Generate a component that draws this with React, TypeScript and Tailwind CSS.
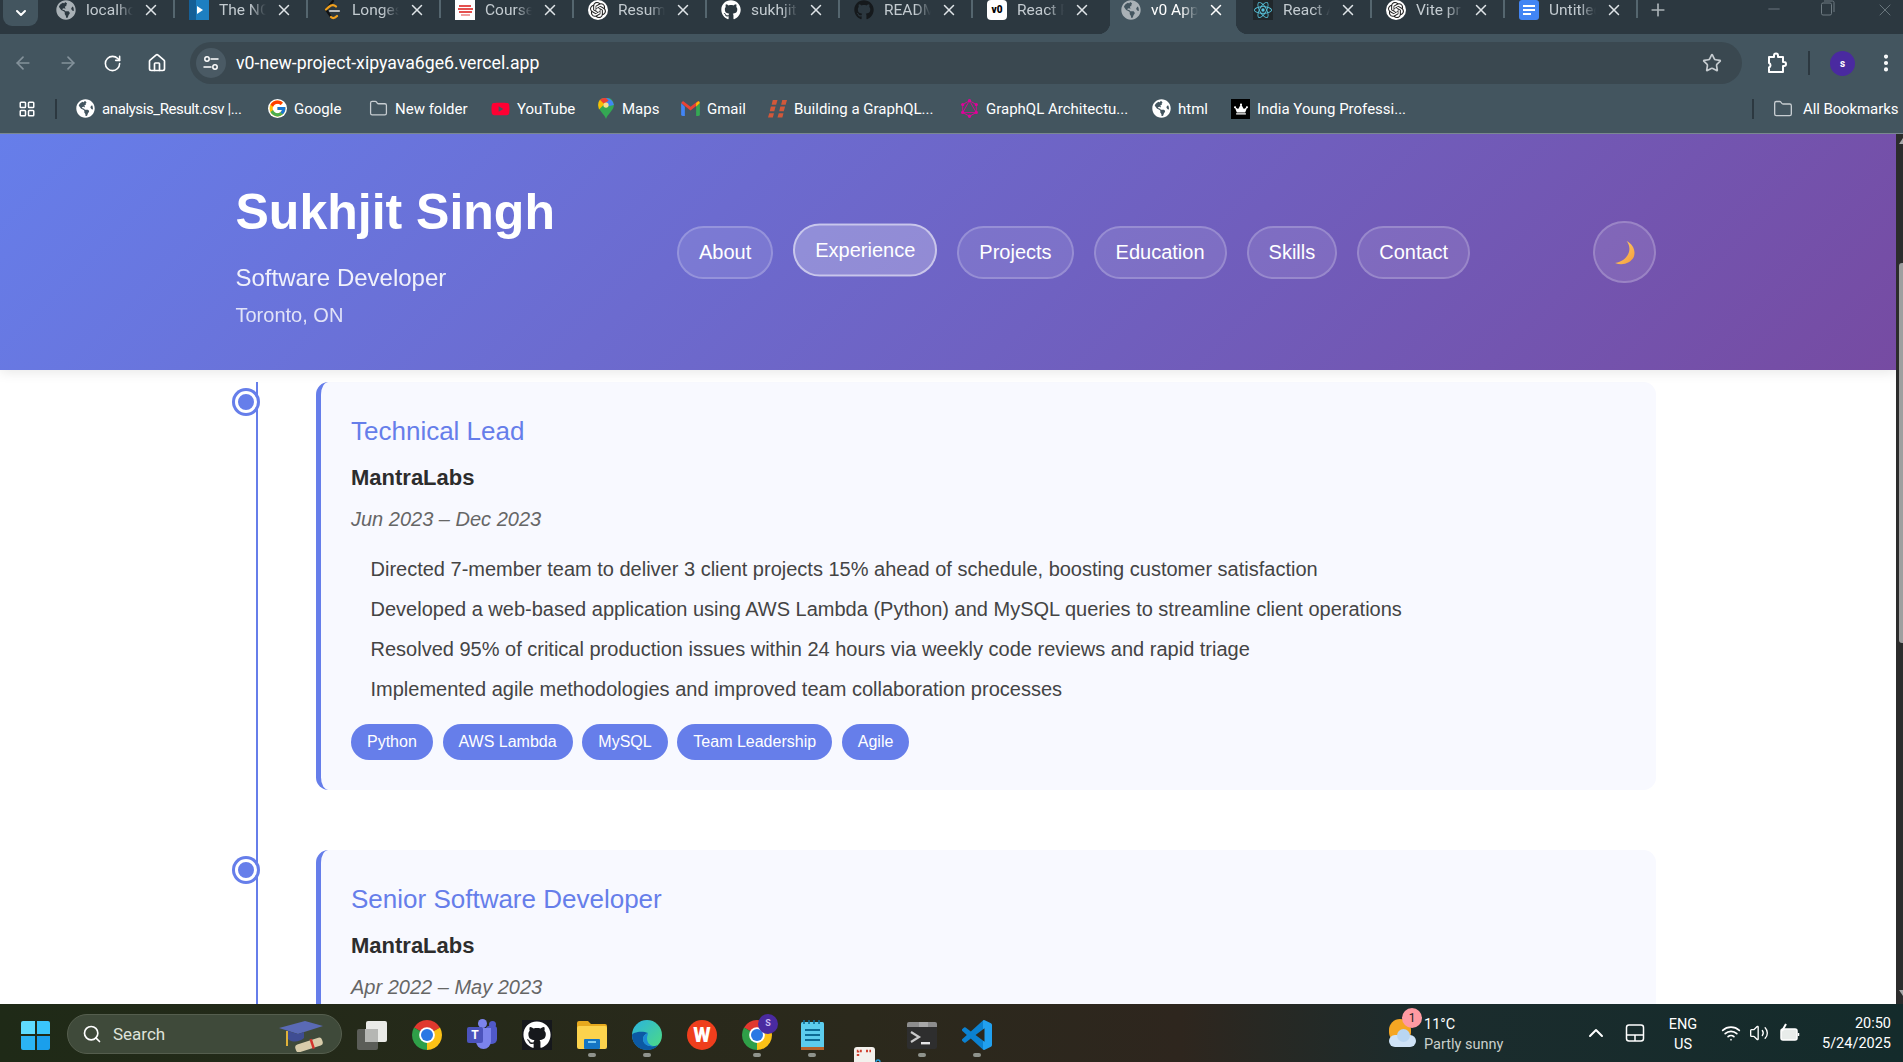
import React from "react";
import {
  ArrowLeft, ArrowRight, RotateCw, House, Star, EllipsisVertical, LayoutGrid, Folder,
  Minus, X, Plus, Search, ChevronUp, Wifi, Volume2, ChevronDown,
} from "lucide-react";
import { FaGithub, FaGlobeAmericas, FaCrown, FaYoutube } from "react-icons/fa";
import { FcGoogle } from "react-icons/fc";
import { SiOpenai, SiGraphql, SiReact } from "react-icons/si";

const ui = "font-['Roboto','Noto_Sans',sans-serif]";

const Globe = ({ c = "text-[#a9b1b6]" }: { c?: string }) => <FaGlobeAmericas className={`h-[20px] w-[20px] ${c}`} />;
const OpenAi = () => (
  <span className="flex h-[20px] w-[20px] items-center justify-center rounded-full bg-white">
    <SiOpenai className="h-[16px] w-[16px] text-[#222]" />
  </span>
);
const tabs: { t: string; i: React.ReactNode; active?: boolean }[] = [
  { t: "localhost", i: <Globe /> },
  {
    t: "The NCAA",
    i: (
      <svg viewBox="0 0 20 20" className="h-[20px] w-[20px]">
        <rect width="20" height="20" fill="#1d7fc1" />
        <rect width="7" height="20" fill="#155f96" />
        <path d="M8 6l6 4-6 4z" fill="#fff" />
      </svg>
    ),
  },
  {
    t: "Longest",
    i: (
      <svg viewBox="0 0 20 20" className="h-[20px] w-[20px]" fill="none" strokeWidth="2.2" strokeLinecap="round">
        <path d="M11 1L4 9.5 9 17" stroke="#111" />
        <path d="M9 17c2 2 4 1 6-1M4 9.5c2-2 3-3 5-4 2-1 4 0 5 1" stroke="#f0a01e" />
        <path d="M8 11h9" stroke="#b9bcbd" />
      </svg>
    ),
  },
  {
    t: "Course",
    i: (
      <span className="flex h-[20px] w-[20px] flex-col items-center justify-center gap-[1px] bg-white">
        <span className="h-[2px] w-[12px] bg-[#e4504f]" />
        <span className="h-[2px] w-[15px] bg-[#e4504f]" />
        <span className="h-[2px] w-[13px] bg-[#e4504f]" />
        <span className="h-[2px] w-[9px] bg-[#f0a0a0]" />
      </span>
    ),
  },
  { t: "Resume", i: <OpenAi /> },
  { t: "sukhjit", i: <FaGithub className="h-[20px] w-[20px] text-white" /> },
  { t: "README", i: <FaGithub className="h-[20px] w-[20px] text-[#15191c]" /> },
  {
    t: "React P",
    i: (
      <span className="flex h-[20px] w-[20px] items-center justify-center rounded-[4px] bg-white text-[10px] leading-none font-black text-black">
        v0
      </span>
    ),
  },
  { t: "v0 App", i: <Globe />, active: true },
  {
    t: "React A",
    i: (
      <span className="flex h-[20px] w-[20px] items-center justify-center bg-[#20272b]">
        <SiReact className="h-[18px] w-[18px] text-[#58c4dc]" />
      </span>
    ),
  },
  { t: "Vite pr", i: <OpenAi /> },
  {
    t: "Untitled",
    i: (
      <span className="flex h-[20px] w-[20px] flex-col items-center justify-center gap-[2px] rounded-[3px] bg-[#4285f4]">
        <span className="h-[2px] w-[12px] bg-white" />
        <span className="h-[2px] w-[12px] bg-white" />
        <span className="h-[2px] w-[8px] self-start ml-[4px] bg-white" />
      </span>
    ),
  },
];

const Tab = ({ t, i, active, hideSep }: { t: string; i: React.ReactNode; active?: boolean; hideSep?: boolean }) => (
  <div
    className={`relative flex h-[34px] shrink-0 items-start pl-[11px] pt-0 ${active ? "mr-[6px] ml-[1px] w-[126px] bg-[#43555f]" : "w-[133px]"}`}
  >
    {active && (
      <>
        <span className="absolute -left-[12px] bottom-0 h-[12px] w-[12px] bg-[radial-gradient(circle_at_0_0,transparent_12px,#43555f_12.5px)]" />
        <span className="absolute -right-[12px] bottom-0 h-[12px] w-[12px] bg-[radial-gradient(circle_at_100%_0,transparent_12px,#43555f_12.5px)]" />
      </>
    )}
    <span className="flex h-[20px] w-[20px] shrink-0 items-center justify-center">{i}</span>
    <span
      className={`ml-[10px] h-[20px] w-[47px] overflow-hidden text-[15.5px] leading-[20px] whitespace-nowrap [mask-image:linear-gradient(to_right,#000_65%,transparent)] ${
        active ? "text-white" : "text-[#c3cbd0]"
      }`}
    >
      {t}
    </span>
    <X className={`ml-[9px] mt-[1px] h-[18px] w-[18px] shrink-0 ${active ? "text-white" : "text-[#dfe4e7]"}`} strokeWidth={2} />
    {!active && !hideSep && <span className="absolute right-[3px] top-0 h-[18px] w-[2px] bg-[#55666f]" />}
  </div>
);

const TabBar = () => (
  <div className={`flex h-[34px] shrink-0 items-start bg-[#2c3840] ${ui}`}>
    <div className="w-[45px] shrink-0 pl-[3px]">
      <div className="flex h-[26px] w-[35px] items-center justify-center rounded-b-[9px] bg-[#43555f]">
        <ChevronDown className="h-[16px] w-[16px] text-white" strokeWidth={3} />
      </div>
    </div>
    {tabs.map((x, n) => (
      <Tab key={n} t={x.t} i={x.i} active={x.active} hideSep={n === 7} />
    ))}
    <Plus className="ml-[7px] h-[20px] w-[20px] text-[#aab2b7]" strokeWidth={2} />
    <div className="ml-auto flex items-start text-[#6f7b82]">
      <Minus className="mr-[38px] h-[18px] w-[18px]" strokeWidth={1.25} />
      <svg viewBox="0 0 14 16" className="mr-[40px] h-[16px] w-[14px]" fill="none" stroke="currentColor" strokeWidth="1">
        <rect x="0.5" y="3" width="10" height="12" rx="1.5" />
        <path d="M3 1h8.5a1.5 1.5 0 0 1 1.5 1.5V12" />
      </svg>
      <X className="mr-[8px] h-[20px] w-[20px]" strokeWidth={1.1} />
    </div>
  </div>
);

const Toolbar = () => (
  <div className={`flex h-[50px] shrink-0 items-start bg-[#43555f] ${ui}`}>
    <div className="flex h-[50px] w-[190px] shrink-0 items-center pt-[8px]">
      <span className="flex w-[45px] justify-center pl-[1px]"><ArrowLeft className="h-[20px] w-[20px] text-[#84929b]" strokeWidth={2} /></span>
      <span className="flex w-[45px] justify-center"><ArrowRight className="h-[20px] w-[20px] text-[#84929b]" strokeWidth={2} /></span>
      <span className="flex w-[44px] justify-center"><RotateCw className="h-[19px] w-[19px] text-white" strokeWidth={2} /></span>
      <span className="flex w-[44px] justify-center pl-[2px]"><House className="h-[20px] w-[20px] text-white" strokeWidth={2} /></span>
    </div>
    <div className="mt-[8px] flex h-[42px] w-[1552px] shrink-0 items-center rounded-full bg-[#3a4850] pl-[6px] pr-[20px]">
      <span className="flex h-[30px] w-[30px] items-center justify-center rounded-full bg-[#4a5a64]">
        <svg viewBox="0 0 18 18" className="h-[18px] w-[18px]" fill="none" stroke="#fff" strokeWidth="1.5" strokeLinecap="round">
          <circle cx="5" cy="5" r="2.2" />
          <path d="M9 5h7M2 13h7" />
          <circle cx="13" cy="13" r="2.2" />
        </svg>
      </span>
      <span className="ml-[10px] pt-[1px] text-[17.7px] leading-none text-white">v0-new-project-xipyava6ge6.vercel.app</span>
      <Star className="ml-auto h-[20px] w-[20px] text-[#c6ccd0]" strokeWidth={2} />
    </div>
    <div className="flex h-[50px] flex-1 items-center pt-[8px] text-white">
      <svg viewBox="0 0 24 24" className="ml-[22px] h-[24px] w-[24px]" fill="none" stroke="currentColor" strokeWidth="2" strokeLinejoin="round">
        <path d="M5 6h5V4.5a2 2 0 0 1 4 0V6h5v5h1a2 2 0 0 1 0 4h-1v6H5v-4.5a2.5 2.5 0 0 0 1.5-2.3A2.5 2.5 0 0 0 5 12z" />
      </svg>
      <span className="ml-[20px] h-[24px] w-[2px] bg-[#2c3840]" />
      <span className="ml-[20px] flex h-[25px] w-[25px] items-center justify-center rounded-full bg-[#4a2aa0] text-[10px] font-bold">s</span>
      <EllipsisVertical className="ml-[20px] h-[22px] w-[22px]" strokeWidth={2.5} />
    </div>
  </div>
);

const bookmarkText = "ml-[7px] pt-[1px] whitespace-nowrap text-[15px] leading-none text-white";
const bookmarks: { t: string; i: React.ReactNode; w: string; x?: string }[] = [
  { t: "analysis_Result.csv |...", i: <FaGlobeAmericas className="h-[19px] w-[19px] text-white" />, w: "w-[192px]", x: "tracking-[-0.4px]" },
  { t: "Google", i: <FcGoogle className="h-[19px] w-[19px] rounded-full bg-white" />, w: "w-[101px]" },
  { t: "New folder", i: <Folder className="h-[19px] w-[19px] text-[#c7cdd1]" strokeWidth={1.6} />, w: "w-[122px]" },
  { t: "YouTube", i: <FaYoutube className="h-[20px] w-[20px] text-[#ff0033]" />, w: "w-[105px]" },
  {
    t: "Maps",
    i: (
      <svg viewBox="0 0 20 24" className="h-[21px] w-[18px]">
        <path d="M10 24C8 18 1 14 1 8a9 9 0 0 1 18 0c0 6-7 10-9 16z" fill="#34a853" />
        <path d="M10 0a9 9 0 0 1 9 8l-9 2z" fill="#4285f4" />
        <path d="M3 2a9 9 0 0 1 7-2l3 3-8 5z" fill="#ea4335" />
        <path d="M1 8a9 9 0 0 1 2-6l5 5-6 6z" fill="#fbbc04" />
        <circle cx="10" cy="8" r="3" fill="#f8e08e" />
      </svg>
    ),
    w: "w-[85px]",
  },
  {
    t: "Gmail",
    i: (
      <svg viewBox="0 0 20 16" className="h-[15px] w-[19px]">
        <path d="M0 2v12a2 2 0 0 0 2 2h2V6z" fill="#4285f4" />
        <path d="M20 2v12a2 2 0 0 1-2 2h-2V6z" fill="#34a853" />
        <path d="M0 2l10 8 10-8-2-2-8 6-8-6z" fill="#ea4335" />
        <path d="M16 6l4-4-1-2-3 2z" fill="#fbbc04" />
      </svg>
    ),
    w: "w-[87px]",
  },
  {
    t: "Building a GraphQL...",
    i: (
      <svg viewBox="0 0 20 20" className="h-[19px] w-[19px]" fill="#d2583a">
        <path d="M5 1h5l-1.4 5H3.8zM3 8h5L6.6 13H1.8zM1.3 15h5l-1.2 4.5H0z" />
        <path d="M15 1h5l-1.4 5h-4.8zM13 8h5l-1.4 5h-4.8zM11.3 15h5l-1.2 4.5H10z" />
      </svg>
    ),
    w: "w-[192px]",
  },
  { t: "GraphQL Architectu...", i: <SiGraphql className="h-[19px] w-[19px] text-[#e10098]" />, w: "w-[192px]" },
  { t: "html", i: <FaGlobeAmericas className="h-[19px] w-[19px] text-white" />, w: "w-[79px]" },
  {
    t: "India Young Professi...",
    i: (
      <span className="flex h-[20px] w-[20px] items-center justify-center bg-black">
        <FaCrown className="h-[14px] w-[14px] text-white" />
      </span>
    ),
    w: "w-[521px]",
  },
];

const Bookmarks = () => (
  <div className={`flex h-[50px] shrink-0 items-center border-b border-[#7a8890] bg-[#43555f] ${ui}`}>
    <LayoutGrid className="ml-[18px] h-[18px] w-[18px] text-white" strokeWidth={2} />
    <span className="ml-[19px] mr-[19px] h-[20px] w-[2px] bg-[#2c3840]" />
    {bookmarks.map((b) => (
      <div key={b.t} className={`flex shrink-0 items-center ${b.w}`}>
        <span className="flex w-[19px] shrink-0 items-center justify-center">{b.i}</span>
        <span className={`${bookmarkText} ${b.x ?? ""}`}>{b.t}</span>
      </div>
    ))}
    <span className="h-[20px] w-[2px] shrink-0 bg-[#2c3840]" />
    <Folder className="ml-[19px] h-[20px] w-[20px] shrink-0 text-[#c7cdd1]" strokeWidth={1.6} />
    <span className="ml-[10px] whitespace-nowrap pt-[1px] text-[15px] leading-none tracking-[-0.1px] text-white">All Bookmarks</span>
  </div>
);

const navItems = [
  { t: "About" },
  { t: "Experience", active: true },
  { t: "Projects" },
  { t: "Education" },
  { t: "Skills" },
  { t: "Contact" },
];

const Header = () => (
  <header className="relative z-10 flex h-[236px] shrink-0 items-center bg-[linear-gradient(135deg,#667eea_0%,#764ba2_100%)] pl-[235.5px] pr-[240px] text-white shadow-[0_2px_12px_rgba(0,0,0,0.1)]">
    <div className="mt-[48px] w-[441.5px] shrink-0 self-start">
      <h1 className="text-[50px] leading-[60px] font-bold">Sukhjit Singh</h1>
      <p className="mt-[21px] text-[24px] leading-[30px] opacity-90">Software Developer</p>
      <p className="mt-[7px] text-[20px] leading-[30px] opacity-80">Toronto, ON</p>
    </div>
    <nav className="flex gap-[20px]">
      {navItems.map((n) => (
        <a
          key={n.t}
          className={`rounded-[31px] border-[2.5px] px-[20px] text-[20px] leading-[49px] ${
            n.active ? "-translate-y-[2.5px] border-white/50 bg-white/25" : "border-white/20 bg-white/10"
          }`}
        >
          {n.t}
        </a>
      ))}
    </nav>
    <button className="ml-auto flex h-[62px] w-[63px] items-center justify-center rounded-full border-[2.5px] border-white/20 bg-white/10">
      <svg viewBox="0 0 24 24" className="h-[25px] w-[25px]">
        <defs>
          <linearGradient id="moon" x1="0" y1="0" x2="1" y2="1">
            <stop offset="0" stopColor="#ffd668" />
            <stop offset="1" stopColor="#f59b3d" />
          </linearGradient>
        </defs>
        <path d="M14 1c6 7 2 19-11 21 7 3 15 0 18-6 2-6-1-12-7-15z" fill="url(#moon)" />
      </svg>
    </button>
  </header>
);

const Card = ({
  title,
  company,
  date,
  bullets,
  tags,
}: {
  title: string;
  company: string;
  date: string;
  bullets?: string[];
  tags?: string[];
}) => (
  <article className="relative ml-[80px] rounded-[12.5px] border-l-[5px] border-[#667eea] bg-[#f8f9ff] p-[30px]">
    <span className="absolute -left-[86px] top-[9px] h-[22px] w-[22px] rounded-full border-[3px] border-white bg-[#667eea] shadow-[0_0_0_3px_#667eea]" />
    <h3 className="text-[26px] leading-[38px] text-[#667eea]">{title}</h3>
    <p className="mt-[13px] text-[22px] leading-[30px] font-bold text-[#2d2d2d]">{company}</p>
    <p className="mt-[12px] text-[20px] leading-[28px] text-[#666] italic">{date}</p>
    {bullets && (
      <ul className="mt-[16px] pl-[19.5px] text-[20px] leading-[40px] text-[#444]">
        {bullets.map((b) => (
          <li key={b}>{b}</li>
        ))}
      </ul>
    )}
    {tags && (
      <div className="mt-[15px] flex gap-[9.7px]">
        {tags.map((t) => (
          <span key={t} className="rounded-full bg-[#667eea] px-[16px] text-[16px] leading-[36px] text-white">
            {t}
          </span>
        ))}
      </div>
    )}
  </article>
);

const Page = () => (
  <div className="flex min-h-0 flex-1">
    <div className="flex min-w-0 flex-1 flex-col overflow-hidden bg-white">
      <Header />
      <main className="relative mt-[12px] ml-[236px] mr-[240px] flex flex-col gap-[60px]">
        <span className="absolute left-[20px] top-0 h-[2000px] w-[2px] bg-[#667eea]" />
        <Card
          title="Technical Lead"
          company="MantraLabs"
          date="Jun 2023 – Dec 2023"
          bullets={[
            "Directed 7-member team to deliver 3 client projects 15% ahead of schedule, boosting customer satisfaction",
            "Developed a web-based application using AWS Lambda (Python) and MySQL queries to streamline client operations",
            "Resolved 95% of critical production issues within 24 hours via weekly code reviews and rapid triage",
            "Implemented agile methodologies and improved team collaboration processes",
          ]}
          tags={["Python", "AWS Lambda", "MySQL", "Team Leadership", "Agile"]}
        />
        <Card title="Senior Software Developer" company="MantraLabs" date="Apr 2022 – May 2023" />
      </main>
    </div>
    <div className="flex w-[7px] shrink-0 flex-col bg-[#2c2c2c] pl-[3px]">
      <span className="mt-[4px] h-0 w-0 border-x-[4px] border-b-[6px] border-x-transparent border-b-[#a8a8a8]" />
      <span className="mt-[119px] h-[380px] w-[4px] rounded-l-[3px] bg-[#9f9f9f]" />
      <span className="mt-auto mb-[8px] h-0 w-0 border-x-[4px] border-t-[6px] border-x-transparent border-t-[#a8a8a8]" />
    </div>
  </div>
);

const Dot = () => <span className="mt-[3px] h-[4px] w-[8px] rounded-full bg-[#8f938c]" />;

const Slot = ({ children, dot }: { children: React.ReactNode; dot?: boolean }) => (
  <div className="flex h-[58px] w-[55px] shrink-0 flex-col items-center pt-[16px]">
    <div className="flex h-[30px] w-[30px] items-center justify-center">{children}</div>
    {dot && <Dot />}
  </div>
);

const Chrome = () => (
  <svg viewBox="4 4 40 40" className="h-[30px] w-[30px]">
    <path d="M24 24L6.68 14A20 20 0 0 1 41.32 14Z" fill="#e0382e" />
    <path d="M24 24L41.32 14A20 20 0 0 1 24 44Z" fill="#fbc116" />
    <path d="M24 24L24 44A20 20 0 0 1 6.68 14Z" fill="#2f9f48" />
    <circle cx="24" cy="24" r="10.5" fill="#fff" />
    <circle cx="24" cy="24" r="8" fill="#2a78e4" />
  </svg>
);

const Taskbar = () => (
  <footer className={`flex h-[58px] shrink-0 items-start bg-[linear-gradient(90deg,#1f2a17_0%,#2b291c_45%,#2e261e_62%,#1b2c2d_75%,#142b2b_100%)] pl-[8px] text-white ${ui}`}>
    <Slot>
      <span className="grid h-[29px] w-[29px] grid-cols-2 gap-[2px]">
        <span className="rounded-tl-[2px] bg-[#5fdcff]" />
        <span className="rounded-tr-[2px] bg-[#3ac6fb]" />
        <span className="rounded-bl-[2px] bg-[#2bb4f4]" />
        <span className="rounded-br-[2px] bg-[#1a9fec]" />
      </span>
    </Slot>
    <div className="ml-[4px] mt-[10px] flex h-[40px] w-[275px] shrink-0 items-center rounded-full border border-[#555e4e] bg-[#3f4a3a] pl-[14px]">
      <Search className="h-[20px] w-[20px] text-white" strokeWidth={2} />
      <span className="ml-[11px] text-[17px] leading-none text-[#dfe3da]">Search</span>
      <svg viewBox="0 0 48 36" className="ml-[112px] h-[36px] w-[48px]">
        <path d="M2 12l26-7 18 5-25 8z" fill="#5a6ab5" />
        <path d="M11 15v8c4 4 12 3 16-1v-6l-6 2z" fill="#3f4d93" />
        <path d="M10 15v15" stroke="#e0b23a" strokeWidth="2" />
        <rect x="18" y="25" width="28" height="8" rx="3" transform="rotate(-18 32 29)" fill="#d8ccaa" />
        <rect x="34" y="23" width="2.5" height="10" transform="rotate(-18 35 28)" fill="#d3342c" />
      </svg>
    </div>
    <div className="ml-[2.5px] flex">
      <Slot>
        <span className="relative h-[29px] w-[30px]">
          <span className="absolute bottom-0 left-0 h-[21px] w-[21px] rounded-[2px] bg-[#5b5d58]" />
          <span className="absolute right-0 top-0 h-[21px] w-[21px] rounded-[2px] bg-[#f4f4f2] opacity-95" />
          <span className="absolute bottom-[8px] left-[8px] h-[13px] w-[13px] bg-[#b5b6b3]" />
        </span>
      </Slot>
      <Slot><Chrome /></Slot>
      <Slot>
        <span className="relative h-[28px] w-[30px]">
          <span className="absolute right-0 top-[5px] h-[18px] w-[11px] rounded-b-[5px] rounded-t-[3px] bg-[#5059c9]" />
          <span className="absolute right-[1px] top-0 h-[7px] w-[7px] rounded-full bg-[#5059c9]" />
          <span className="absolute right-[6px] top-[7px] h-[21px] w-[15px] rounded-b-[8px] bg-[#7b83eb]" />
          <span className="absolute left-[11px] top-[-2px] h-[9px] w-[9px] rounded-full bg-[#7b83eb]" />
          <span className="absolute left-0 top-[6px] flex h-[16px] w-[16px] items-center justify-center rounded-[2px] bg-[#4b53bc] text-[12px] font-bold leading-none">T</span>
        </span>
      </Slot>
      <Slot>
        <span className="flex h-[30px] w-[30px] items-center justify-center bg-[#16181c]">
          <FaGithub className="h-[28px] w-[28px] text-white" />
        </span>
      </Slot>
      <Slot dot>
        <svg viewBox="0 0 30 28" className="h-[28px] w-[30px]">
          <path d="M0 2a2 2 0 0 1 2-2h9l3 3h14a2 2 0 0 1 2 2v4H0z" fill="#e6a91e" />
          <rect y="5" width="30" height="23" rx="2" fill="#fcd34d" />
          <rect x="7" y="18" width="16" height="10" rx="1" fill="#1475c4" />
          <rect x="11" y="20" width="8" height="2" fill="#7ecbf3" />
        </svg>
      </Slot>
      <Slot dot>
        <svg viewBox="0 0 30 30" className="h-[30px] w-[30px]">
          <defs>
            <linearGradient id="edge" x1="0" y1="0" x2="1" y2="1">
              <stop offset="0" stopColor="#2ab3e0" />
              <stop offset="1" stopColor="#4fdc7f" />
            </linearGradient>
          </defs>
          <circle cx="15" cy="15" r="15" fill="url(#edge)" />
          <path d="M0 15C0 24 7 30 15 30c5 0 9-2 11-5-7 3-15 0-15-6 0-3 2-5 5-6-7-3-16 0-16 2z" fill="#0c59a4" />
          <path d="M11 19c0 5 5 8 10 7-4-1-6-4-6-8 0-2 1-4 1-5-3 1-5 3-5 6z" fill="#1c8ad6" />
        </svg>
      </Slot>
      <Slot>
        <span className="flex h-[30px] w-[30px] items-center justify-center rounded-full bg-[#ef3e1d] text-[20px] font-black leading-none text-white">W</span>
      </Slot>
      <Slot dot>
        <span className="relative h-[30px] w-[30px]">
          <Chrome />
          <span className="absolute -right-[6px] -top-[6px] flex h-[20px] w-[20px] items-center justify-center rounded-full bg-[#4a2aa0] text-[9px] font-bold text-[#c9b9f2]">S</span>
        </span>
      </Slot>
      <Slot dot>
        <svg viewBox="0 0 23 30" className="h-[30px] w-[23px]">
          <rect y="2" width="23" height="28" rx="1.5" fill="#5ccdee" />
          <rect y="27" width="23" height="3" fill="#b5622c" />
          <rect x="4" y="9" width="15" height="2" fill="#0d6b95" />
          <rect x="4" y="14" width="15" height="2" fill="#0d6b95" />
          <rect x="4" y="19" width="15" height="2" fill="#0d6b95" />
          <path d="M3 0v4M8 0v4M13 0v4M18 0v4" stroke="#0d6b95" strokeWidth="1.6" />
        </svg>
      </Slot>
      <div className="flex h-[58px] w-[55px] shrink-0 justify-center overflow-hidden pt-[42px]">
        <svg viewBox="0 0 28 24" className="h-[24px] w-[28px]">
          <rect x="1" y="1" width="21" height="23" rx="3" fill="#f3f1ed" />
          <path d="M5 10V5h5M13 5h5" stroke="#d0412f" strokeWidth="2.4" strokeDasharray="2 1.4" fill="none" />
          <circle cx="25" cy="16" r="2" fill="none" stroke="#2aa0dc" strokeWidth="1.4" />
        </svg>
      </div>
      <Slot dot>
        <svg viewBox="0 0 30 27" className="h-[27px] w-[30px]">
          <rect width="30" height="27" rx="2" fill="#2e2e2e" />
          <path d="M2 0h26a2 2 0 0 1 2 2v3H0V2a2 2 0 0 1 2-2z" fill="#8d8d8d" />
          <rect x="12" y="0" width="9" height="5" fill="#a8a8a8" />
          <path d="M4 10l8 5-8 5" stroke="#c9c9c9" strokeWidth="2.2" fill="none" />
          <rect x="14" y="20" width="9" height="2.4" fill="#e6e6e6" />
        </svg>
      </Slot>
      <Slot dot>
        <svg viewBox="0 0 24 24" className="h-[30px] w-[30px]">
          <defs>
            <linearGradient id="vsc" x1="0" y1="0" x2="1" y2="0">
              <stop offset="0.7" stopColor="#0b81d0" />
              <stop offset="0.7" stopColor="#21a0ef" />
            </linearGradient>
          </defs>
          <path
            d="M23.15 2.587L18.21.21a1.494 1.494 0 0 0-1.705.29l-9.46 8.63-4.12-3.128a.999.999 0 0 0-1.276.057L.327 7.261A1 1 0 0 0 .326 8.74L3.899 12 .326 15.26a1 1 0 0 0 .001 1.479L1.65 17.94a.999.999 0 0 0 1.276.057l4.12-3.128 9.46 8.63a1.492 1.492 0 0 0 1.704.29l4.942-2.377A1.5 1.5 0 0 0 24 20.06V3.939a1.5 1.5 0 0 0-.85-1.352zm-5.146 14.861L10.826 12l7.178-5.448v10.896z"
            fill="url(#vsc)"
          />
        </svg>
      </Slot>
    </div>
    <div className="ml-auto flex h-[58px] w-[514px] shrink-0 items-center">
      <div className="relative h-[28px] w-[28px] shrink-0">
        <span className="absolute left-0 top-0 h-[24px] w-[22px] rounded-full bg-[#f5a623]" />
        <span className="absolute bottom-0 left-0 h-[12px] w-[27px] rounded-full bg-[#cfe3f7]" />
        <span className="absolute bottom-[5px] left-[8px] h-[13px] w-[13px] rounded-full bg-[#b9d6f2]" />
        <span className="absolute -right-[5px] -top-[11px] flex h-[20px] w-[20px] items-center justify-center rounded-full bg-[#ff9aa2] text-[12px] leading-none text-[#222]">1</span>
      </div>
      <div className="ml-[7px] w-[160px] shrink-0 pt-[4px] text-[14.5px] leading-[20px]">
        <p>11°C</p>
        <p className="text-[#c9cfcb]">Partly sunny</p>
      </div>
      <ChevronUp className="h-[24px] w-[24px] shrink-0" strokeWidth={2} />
      <svg viewBox="0 0 20 20" className="ml-[17px] h-[20px] w-[20px] shrink-0" fill="none" stroke="#fff" strokeWidth="1.5">
        <rect x="1.5" y="2" width="17" height="16" rx="2.5" />
        <path d="M1.5 12h17M10 12v6" />
      </svg>
      <div className="ml-[18px] w-[40px] shrink-0 pt-[4px] text-center text-[14.5px] leading-[20px]">
        <p>ENG</p>
        <p>US</p>
      </div>
      <Wifi className="ml-[18px] h-[20px] w-[20px] shrink-0" strokeWidth={2} />
      <Volume2 className="ml-[8px] h-[20px] w-[20px] shrink-0" strokeWidth={1.6} />
      <svg viewBox="0 0 22 20" className="ml-[10px] h-[20px] w-[22px] shrink-0" fill="none" stroke="#fff" strokeWidth="1.5">
        <rect x="2" y="6" width="16" height="11" rx="2" fill="#e8ecea" />
        <path d="M19.5 10v3" />
        <path d="M7 1L3 8" strokeWidth="2" />
      </svg>
      <div className="ml-auto pr-[12px] pt-[2px] text-right text-[14.5px] leading-[20px]">
        <p>20:50</p>
        <p>5/24/2025</p>
      </div>
    </div>
  </footer>
);

export default function App() {
  return (
    <div className="flex h-[1062px] w-[1903px] flex-col overflow-hidden bg-white font-['Liberation_Sans',Arial,sans-serif]">
      <TabBar />
      <Toolbar />
      <Bookmarks />
      <Page />
      <Taskbar />
    </div>
  );
}
